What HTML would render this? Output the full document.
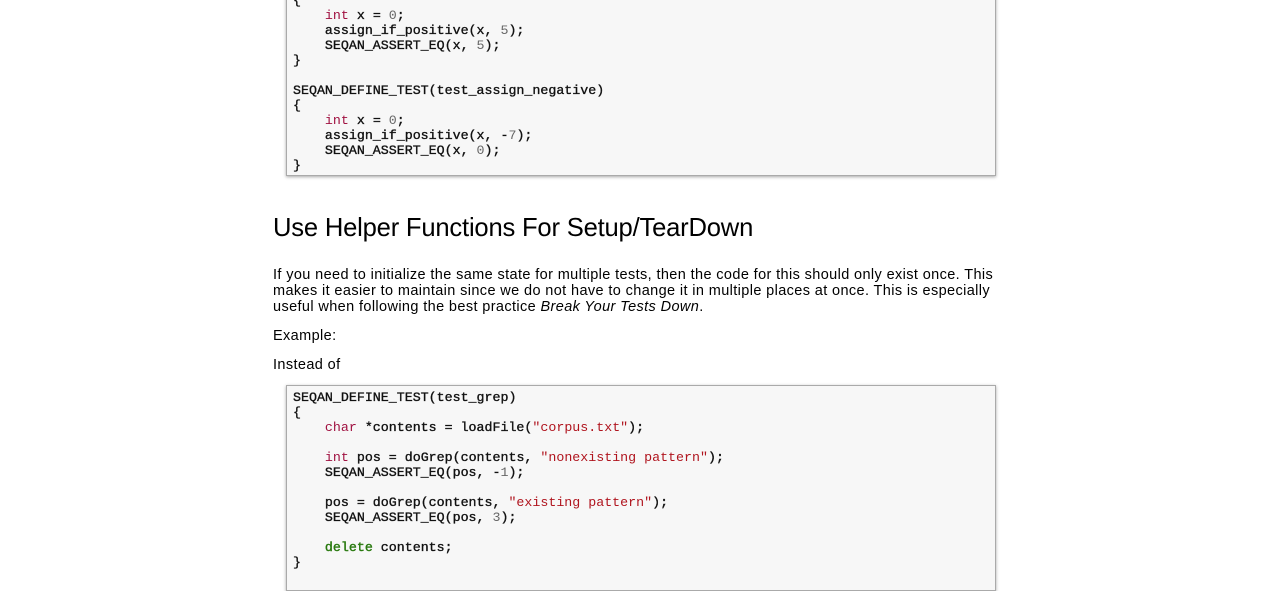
<!DOCTYPE html>
<html><head><style>
body{margin:0;background:#fff;width:1264px;height:569px;overflow:hidden;position:relative;font-family:"Liberation Sans",sans-serif;color:#000}
pre{position:absolute;left:286px;width:694px;margin:0;padding:0 8px 0 6px;background:#f7f7f7;border:1px solid #aaa;box-shadow:0 1px 3px rgba(0,0,0,.35);font-family:"Liberation Mono",monospace;font-size:13.3px;line-height:15px;color:#111;font-weight:normal;-webkit-text-stroke:0.35px #111}
.k{color:#a01040;-webkit-text-stroke:0}.n{color:#666;-webkit-text-stroke:0}.s{color:#b0141e;-webkit-text-stroke:0}.g{color:#2a7a10;-webkit-text-stroke:0.4px #2a7a10}
h2{position:absolute;left:273px;top:214px;margin:0;font-size:25.6px;font-weight:normal;letter-spacing:-0.2px}
p{position:absolute;left:273px;margin:0;font-size:14.5px;line-height:16px;width:742px;letter-spacing:0.38px}
</style></head><body>
<pre style="top:-8px;height:182px">{
    <span class="k">int</span> x = <span class="n">0</span>;
    assign_if_positive(x, <span class="n">5</span>);
    SEQAN_ASSERT_EQ(x, <span class="n">5</span>);
}

SEQAN_DEFINE_TEST(test_assign_negative)
{
    <span class="k">int</span> x = <span class="n">0</span>;
    assign_if_positive(x, -<span class="n">7</span>);
    SEQAN_ASSERT_EQ(x, <span class="n">0</span>);
}</pre>
<h2>Use Helper Functions For Setup/TearDown</h2>
<p style="top:267px">If you need to initialize the same state for multiple tests, then the code for this should only exist once. This makes it easier to maintain since we do not have to change it in multiple places at once. This is especially useful when following the best practice <i>Break Your Tests Down</i>.</p>
<p style="top:328px">Example:</p>
<p style="top:357px">Instead of</p>
<pre style="top:385px;height:200px;padding-top:4px">SEQAN_DEFINE_TEST(test_grep)
{
    <span class="k">char</span> *contents = loadFile(<span class="s">"corpus.txt"</span>);

    <span class="k">int</span> pos = doGrep(contents, <span class="s">"nonexisting pattern"</span>);
    SEQAN_ASSERT_EQ(pos, -<span class="n">1</span>);

    pos = doGrep(contents, <span class="s">"existing pattern"</span>);
    SEQAN_ASSERT_EQ(pos, <span class="n">3</span>);

    <span class="g">delete</span> contents;
}</pre>
</body></html>
